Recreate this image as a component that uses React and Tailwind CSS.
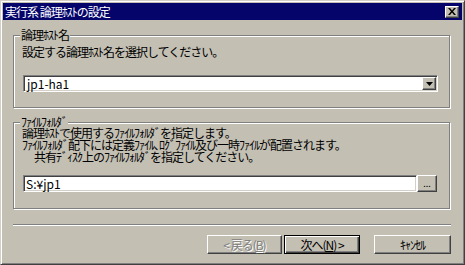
import React from 'react';

const font = { fontFamily: '"Noto Sans CJK JP", "Noto Sans", sans-serif' };

const raised =
  'border border-t-white border-l-white border-r-[#404040] border-b-[#404040] shadow-[inset_-1px_-1px_0_#808080]';
const sunken =
  'border border-t-[#808080] border-l-[#808080] border-r-white border-b-white shadow-[inset_1px_1px_0_#404040,inset_-1px_-1px_0_#d4d0c8]';
const etched =
  'border border-[#808080] shadow-[1px_1px_0_#fff,inset_1px_1px_0_#fff]';

function GroupBox({ label, className, children }) {
  return (
    <div className={`relative w-[437px] ${etched} ${className}`}>
      <span className="absolute left-[6px] top-[-7px] px-[1px] bg-[#c3bfb3] leading-[12px]">
        {label}
      </span>
      {children}
    </div>
  );
}

export default function App() {
  return (
    <div
      style={font}
      className="w-[465px] h-[265px] bg-[#c3bfb3] text-black text-[12px] leading-[12px] tracking-[-1px] border border-t-[#d4d0c8] border-l-[#d4d0c8] border-r-[#404040] border-b-[#404040] shadow-[inset_1px_1px_0_#fff,inset_-1px_-1px_0_#808080] p-[2px] flex flex-col"
    >
      {/* Title bar */}
      <div className="h-[17px] bg-[#04046a] flex items-center justify-between pl-[2px]">
        <span className="text-white">実行系 論理ﾎｽﾄの設定</span>
        <button className={`w-[14px] h-[12px] mr-[3px] bg-[#c3bfb3] ${raised} flex items-center justify-center`}>
          <svg width="8" height="7" viewBox="0 0 8 7">
            <path d="M0 0h2l2 2.5L6 0h2L5 3.5 8 7H6L4 4.5 2 7H0l3-3.5z" fill="#000" />
          </svg>
        </button>
      </div>

      {/* Body */}
      <div className="flex flex-col pl-[10px]">
        <GroupBox label="論理ﾎｽﾄ名" className="mt-[15px] h-[73px] pt-[10px] pl-[8px]">
          <p>設定する論理ﾎｽﾄ名を選択してください。</p>
          <div className={`mt-[17px] ml-[1px] w-[415px] h-[17px] bg-white ${sunken} p-[1px] flex items-center`}>
            <span className="flex-1 pl-[2px] tracking-normal">jp1-ha1</span>
            <span className={`w-[14px] h-[13px] bg-[#c3bfb3] ${raised} flex items-center justify-center`}>
              <svg width="7" height="4" viewBox="0 0 7 4">
                <path d="M0 0h7L3.5 4z" fill="#000" />
              </svg>
            </span>
          </div>
        </GroupBox>

        <GroupBox label="ﾌｧｲﾙﾌｫﾙﾀﾞ" className="mt-[14px] h-[87px] pt-[4px] pl-[8px]">
          <div className="leading-[12px]">
            <p>論理ﾎｽﾄで使用するﾌｧｲﾙﾌｫﾙﾀﾞを指定します。</p>
            <p>ﾌｧｲﾙﾌｫﾙﾀﾞ配下には定義ﾌｧｲﾙ､ﾛｸﾞﾌｧｲﾙ及び一時ﾌｧｲﾙが配置されます。</p>
            <p className="pl-[12px]">共有ﾃﾞｨｽｸ上のﾌｧｲﾙﾌｫﾙﾀﾞを指定してください。</p>
          </div>
          <div className="mt-[12px] ml-[1px] flex">
            <div className={`w-[394px] h-[17px] bg-white ${sunken} flex items-center pl-[2px] tracking-normal`}>
              S:¥jp1
            </div>
            <button className={`w-[20px] h-[17px] bg-[#c3bfb3] ${raised} text-[9px] leading-[9px] tracking-normal flex items-end justify-center pb-[3px]`}>
              ...
            </button>
          </div>
        </GroupBox>

        {/* Separator */}
        <div className="mt-[15px] w-[438px] h-[2px] border-t border-t-[#808080] border-b border-b-white" />

        {/* Buttons */}
        <div className="mt-[9px] w-[438px] flex justify-end">
          <button className={`w-[75px] h-[19px] bg-[#c3bfb3] ${raised} text-[#808080] [text-shadow:1px_1px_0_#fff]`}>
            &lt; 戻る(<span className="underline">B</span>)
          </button>
          <button className="ml-[2px] w-[76px] h-[19px] bg-[#c3bfb3] border border-black shadow-[inset_1px_1px_0_#fff,inset_-1px_-1px_0_#404040,inset_-2px_-2px_0_#808080]">
            次へ(<span className="underline">N</span>) &gt;
          </button>
          <button className={`ml-[14px] w-[77px] h-[19px] bg-[#c3bfb3] ${raised}`}>
            ｷｬﾝｾﾙ
          </button>
        </div>
      </div>
    </div>
  );
}
